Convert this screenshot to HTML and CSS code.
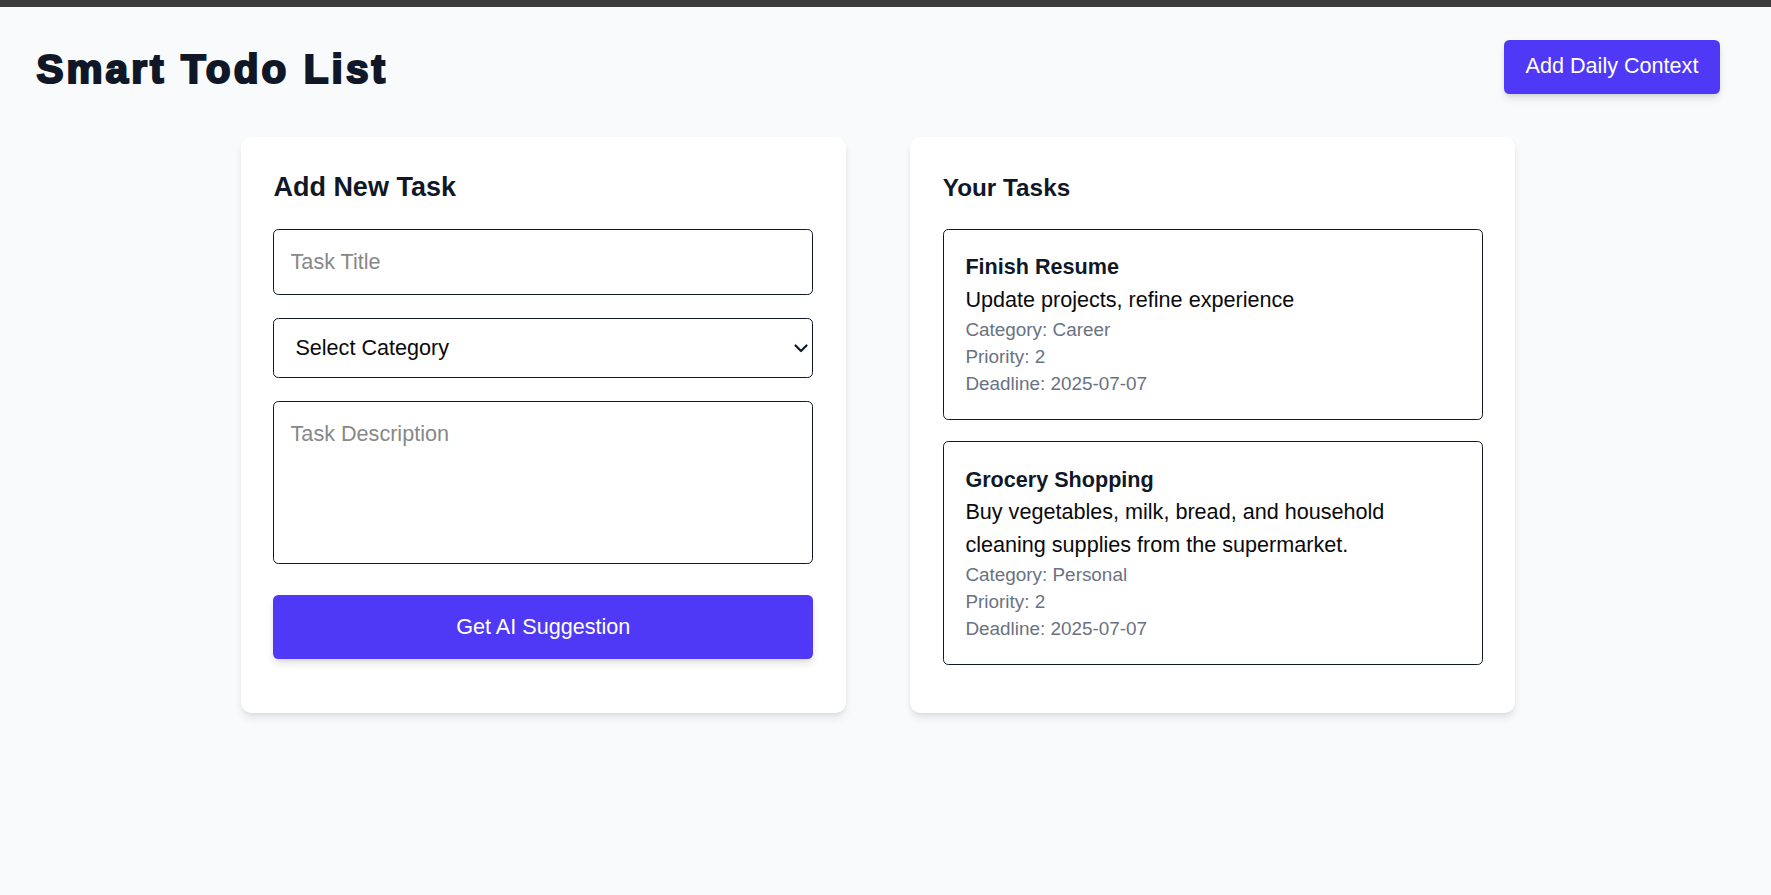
FILE: index.html
```html
<!DOCTYPE html>
<html lang="en">
<head>
<meta charset="utf-8">
<title>Smart Todo List</title>
<link rel="stylesheet" href="styles.css">
</head>
<body>
<div class="topbar"></div>
<header class="header">
  <h1 class="app-title">Smart Todo List</h1>
  <button class="btn-context" type="button">Add Daily Context</button>
</header>
<main class="main">
  <div class="grid">
    <section class="card card-form">
      <h2 class="card-title">Add New Task</h2>
      <input class="field field-input" type="text" placeholder="Task Title">
      <div class="select-wrap">
        <select class="field field-select">
          <option>Select Category</option>
          <option>Career</option>
          <option>Personal</option>
        </select>
        <svg class="chevron" width="14" height="9" viewBox="0 0 14 9" aria-hidden="true"><path d="M1.5 1.5 L7 7 L12.5 1.5" fill="none" stroke="#101828" stroke-width="2.2" stroke-linecap="round" stroke-linejoin="round"/></svg>
      </div>
      <textarea class="field field-textarea" rows="4" placeholder="Task Description"></textarea>
      <button class="btn-suggest" type="button">Get AI Suggestion</button>
    </section>
    <section class="card">
      <h2 class="card-title card-title-sm">Your Tasks</h2>
      <div class="task-list">
        <article class="task">
          <h3 class="task-name">Finish Resume</h3>
          <p class="task-desc">Update projects, refine experience</p>
          <p class="task-meta">Category: Career</p>
          <p class="task-meta">Priority: 2</p>
          <p class="task-meta">Deadline: 2025-07-07</p>
        </article>
        <article class="task">
          <h3 class="task-name">Grocery Shopping</h3>
          <p class="task-desc">Buy vegetables, milk, bread, and household cleaning supplies from the supermarket.</p>
          <p class="task-meta">Category: Personal</p>
          <p class="task-meta">Priority: 2</p>
          <p class="task-meta">Deadline: 2025-07-07</p>
        </article>
      </div>
    </section>
  </div>
</main>
</body>
</html>
```
FILE: styles.css
```css
* { box-sizing: border-box; }
html, body { margin: 0; padding: 0; }
body {
  background: #f9fafb;
  font-family: "Liberation Sans", Arial, sans-serif;
  color: #0a0a0a;
  min-height: 895px;
}
.topbar {
  height: 7px;
  background: #3c3c3c;
}
.header {
  display: flex;
  align-items: center;
  justify-content: space-between;
  padding: 32.5px 51px 0 32.4px;
}
.app-title {
  margin: 5.4px 0 0 4px;
  font-size: 40.5px;
  line-height: 48.6px;
  font-weight: 700;
  letter-spacing: 3.1px;
  color: #101828;
  -webkit-text-stroke: 2.2px #101828;
}
.btn-context {
  font-family: inherit;
  font-size: 21.6px;
  line-height: 32.4px;
  padding: 10.8px 21.6px;
  color: #fff;
  background: #4f39f6;
  border: 0;
  border-radius: 5.4px;
  box-shadow: 0 5px 8px -1px rgba(0,0,0,0.12), 0 2px 5px -2px rgba(0,0,0,0.1);
  cursor: pointer;
}
.main {
  padding-right: 15px;
  margin-top: 43.5px;
}
.grid {
  max-width: 1274px;
  margin: 0 auto;
  display: grid;
  grid-template-columns: 1fr 1fr;
  gap: 64.8px;
}
.card {
  background: #fff;
  border-radius: 10.8px;
  box-shadow: 0 5.4px 8px -1.35px rgba(0,0,0,0.09), 0 2.7px 5.4px -2.7px rgba(0,0,0,0.08);
  padding: 32.4px;
  display: flex;
  flex-direction: column;
}
.card-form { padding-bottom: 53.3px; }
.card-title {
  margin: 0 0 21.6px;
  font-size: 27px;
  line-height: 37.8px;
  font-weight: 700;
  color: #101828;
}
.card-title-sm { font-size: 24.3px; }
.field {
  display: block;
  width: 100%;
  font-family: inherit;
  font-size: 21.6px;
  line-height: 32.4px;
  color: #0a0a0a;
  background: #fff;
  border: 1px solid #101828;
  border-radius: 5.4px;
  padding: 16.2px;
  margin: 0;
  outline: none;
}
.field::placeholder { color: #888888; opacity: 1; }
.field-input { height: 66px; margin-bottom: 23px; }
.select-wrap {
  position: relative;
  margin-bottom: 23.4px;
}
.field-select {
  height: 60px;
  padding: 0 40px 0 21px;
  line-height: normal;
  -webkit-appearance: none;
  appearance: none;
}
.chevron {
  position: absolute;
  right: 5.5px;
  top: 26px;
  pointer-events: none;
}
.field-textarea {
  height: 162.6px;
  resize: none;
  margin-bottom: 31.7px;
}
.btn-suggest {
  display: block;
  width: 100%;
  height: 64px;
  font-family: inherit;
  font-size: 21.6px;
  line-height: 32.4px;
  color: #fff;
  background: #4f39f6;
  border: 0;
  border-radius: 5.4px;
  box-shadow: 0 5px 8px -1px rgba(0,0,0,0.12), 0 2px 5px -2px rgba(0,0,0,0.1);
  cursor: pointer;
}
.task-list {
  display: flex;
  flex-direction: column;
  gap: 21.6px;
}
.task {
  border: 1px solid #101828;
  border-radius: 5.4px;
  padding: 21.6px;
}
.task-name {
  margin: 0;
  font-size: 21.6px;
  line-height: 32.4px;
  font-weight: 700;
  color: #101828;
}
.task-desc {
  margin: 0;
  font-size: 21.6px;
  line-height: 32.4px;
  color: #0a0a0a;
}
.task-meta {
  margin: 0;
  font-size: 18.9px;
  line-height: 27px;
  color: #6a7282;
}
```
